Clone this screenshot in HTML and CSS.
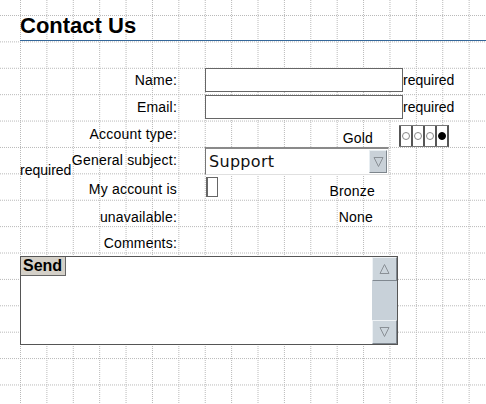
FILE: index.html
```html
<!DOCTYPE html>
<html lang="en">
<head>
<meta charset="utf-8">
<title>Contact Us</title>
<link rel="stylesheet" href="styles.css">
</head>
<body>
<div class="page">
  <h1 class="title">Contact Us</h1>
  <form class="form">
    <div class="lbl">Name:</div>
    <div class="ctl"><span class="input"></span><span class="req">required</span></div>

    <div class="lbl">Email:</div>
    <div class="ctl"><span class="input"></span><span class="req">required</span></div>

    <div class="lbl">Account type:</div>
    <div class="ctl ctl-top">
      <span class="opt opt-low">Gold</span>
      <span class="radios">
        <span class="rad"><span class="dot"></span></span>
        <span class="rad"><span class="dot"></span></span>
        <span class="rad"><span class="dot"></span></span>
        <span class="rad"><span class="dot on"></span></span>
      </span>
    </div>

    <div class="lbl lbl-split"><span class="req-low">required</span><span>General subject:</span></div>
    <div class="ctl ctl-top">
      <span class="select"><span class="select-text">Support</span><span class="select-btn"><svg width="11" height="12" viewBox="0 0 11 12"><path d="M1 1.5 H10 L5.5 10.5 Z" fill="none" stroke="#8a9096" stroke-width="1"/></svg></span></span>
    </div>

    <div class="lbl">My account is</div>
    <div class="ctl ctl-top">
      <span class="check"></span>
      <span class="opt opt-after">Bronze</span>
    </div>

    <div class="lbl">unavailable:</div>
    <div class="ctl"><span class="opt">None</span></div>

    <div class="lbl">Comments:</div>
    <div class="ctl"></div>
  </form>
  <div class="textarea">
    <span class="send">Send</span>
    <span class="scroll">
      <span class="sbtn"><svg width="11" height="12" viewBox="0 0 11 12"><path d="M5.5 1.5 L10 10.5 H1 Z" fill="none" stroke="#8a9096" stroke-width="1"/></svg></span>
      <span class="sbtn"><svg width="11" height="12" viewBox="0 0 11 12"><path d="M1 1.5 H10 L5.5 10.5 Z" fill="none" stroke="#8a9096" stroke-width="1"/></svg></span>
    </span>
  </div>
</div>
</body>
</html>
```

FILE: styles.css
```css
html, body {
  margin: 0;
  padding: 0;
}
body {
  min-height: 404px;
  background-color: #ffffff;
  background-image:
    conic-gradient(from 0deg at 1px 1px, transparent 0deg 270deg, #b8b8b8 270deg 360deg),
    conic-gradient(from 0deg at 1px 1px, transparent 0deg 270deg, #b8b8b8 270deg 360deg);
  background-size: 2px 26.4px, 26.4px 2px;
  background-position: 0 15px, 20px 0;
  font-family: "Liberation Sans", Arial, sans-serif;
  font-size: 14px;
  color: #000;
}
.page {
  padding-left: 20px;
}
.title {
  margin: 0;
  padding: 13px 0 1px;
  font-size: 22px;
  line-height: 26px;
  font-weight: bold;
  border-bottom: 1px solid #336699;
}
.form {
  margin-top: 26px;
  display: grid;
  grid-template-columns: 157px 1fr;
  grid-template-rows: 26px 27px 27px 28px 28px 27px 26px;
  column-gap: 28px;
  letter-spacing: 0.2px;
}
.lbl {
  display: flex;
  align-items: center;
  justify-content: flex-end;
  line-height: 16px;
  white-space: nowrap;
}
.lbl-split {
  justify-content: space-between;
  align-items: flex-start;
}
.lbl-split span {
  margin-top: 5px;
}
.lbl-split .req-low {
  margin-top: 15px;
  letter-spacing: 0;
}
.ctl {
  display: flex;
  align-items: center;
}
.ctl-top {
  align-items: flex-start;
}
.input {
  width: 196px;
  height: 22px;
  border: 1px solid #666;
  background: #fff;
}
.req {
  line-height: 16px;
  letter-spacing: 0;
}
.opt {
  width: 168px;
  text-align: right;
  line-height: 16px;
}
.opt-low {
  margin-top: 10px;
}
.opt-after {
  width: 157px;
  margin-top: 8px;
}
.radios {
  margin-left: 26px;
  margin-top: 5px;
  display: flex;
  border-top: 1px solid #777;
  border-bottom: 1px solid #777;
  border-right: 2px solid #555;
  background: #fff;
}
.rad {
  width: 10px;
  height: 20px;
  border-left: 2px solid #555;
  display: flex;
  align-items: center;
  justify-content: center;
}
.dot {
  width: 6px;
  height: 6px;
  border: 1px solid #888;
  border-radius: 50%;
}
.dot.on {
  background: #000;
  border-color: #000;
}
.select {
  width: 182px;
  height: 25px;
  border-top: 2px solid #8a8a8a;
  border-left: 1px solid #777;
  border-right: 1px solid #e0e0e0;
  border-bottom: 1px solid #e0e0e0;
  background: #fff;
  display: flex;
  align-items: center;
  justify-content: space-between;
}
.select-text {
  font-family: "DejaVu Sans", sans-serif;
  font-size: 16px;
  letter-spacing: 0.3px;
  color: #111;
  padding-left: 3px;
  line-height: 20px;
}
.select-btn {
  width: 16px;
  height: 21px;
  margin-right: 1px;
  background: #c9d1d8;
  border-top: 1px solid #e8eef2;
  border-left: 1px solid #e8eef2;
  border-right: 1px solid #7d858c;
  border-bottom: 1px solid #7d858c;
  display: flex;
  align-items: center;
  justify-content: center;
}
.check {
  width: 9px;
  height: 18px;
  margin-top: 2px;
  margin-left: 1px;
  border: 1px solid #666;
  border-left-width: 2px;
  background: #fff;
}
.textarea {
  width: 376px;
  height: 87px;
  border: 1px solid #555;
  background: #fff;
  display: flex;
  justify-content: space-between;
  align-items: flex-start;
}
.send {
  font-size: 16px;
  font-weight: bold;
  line-height: 17px;
  padding: 0 2px;
  height: 18px;
  width: 40px;
  background: #d4d0c8;
  border-right: 1px solid #666;
  border-bottom: 1px solid #666;
}
.scroll {
  width: 25px;
  height: 87px;
  background: #c8d1d9;
  display: flex;
  flex-direction: column;
  justify-content: space-between;
}
.sbtn {
  height: 22px;
  background: #ccd5dc;
  border-top: 1px solid #eef2f5;
  border-left: 1px solid #eef2f5;
  border-right: 1px solid #808890;
  border-bottom: 1px solid #808890;
  display: flex;
  align-items: center;
  justify-content: center;
}
```
